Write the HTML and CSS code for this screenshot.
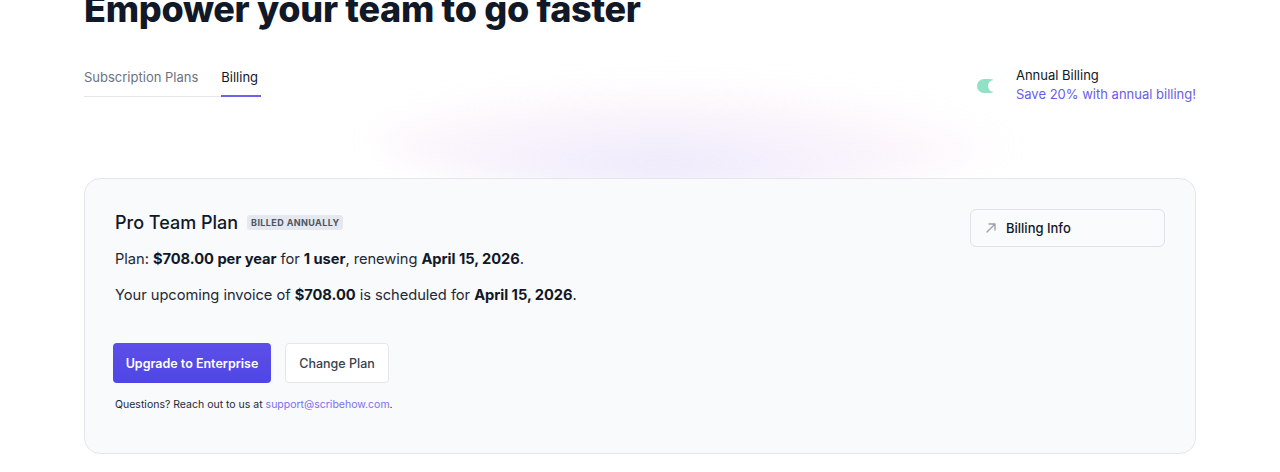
FILE: index.html
```html
<!DOCTYPE html>
<html>
<head>
    <meta charset="UTF-8">
    <link rel="stylesheet" href="styles.css">
</head>
<body>
    <div class="page">
        <h1>Empower your team to go faster</h1>

        <div class="toolbar">
            <div class="tabs">
                <span class="tab">Subscription Plans</span>
                <span class="tab active">Billing</span>
            </div>
            <div class="annual">
                <span class="toggle"><span class="knob"></span></span>
                <div class="annual-text">
                    <div class="annual-title">Annual Billing</div>
                    <div class="annual-save">Save 20% with annual billing!</div>
                </div>
            </div>
        </div>

        <div class="glow"></div>

        <div class="card">
            <div class="card-head">
                <div class="card-info">
                    <div class="plan-title">
                        <span class="plan-name">Pro Team Plan</span>
                        <span class="badge">BILLED ANNUALLY</span>
                    </div>
                    <p class="line">Plan: <b>$708.00 per year</b> for <b>1 user</b>, renewing <b>April 15, 2026</b>.</p>
                    <p class="line">Your upcoming invoice of <b>$708.00</b> is scheduled for <b>April 15, 2026</b>.</p>
                </div>
                <button class="info-btn">
                    <svg width="12" height="12" viewBox="0 0 12 12" fill="none" stroke="#9ca3af" stroke-width="1.4" stroke-linecap="round" stroke-linejoin="round"><path d="M2 10 L10 2 M4 2 H10 V8"/></svg>
                    Billing Info
                </button>
            </div>

            <div class="actions">
                <button class="btn primary">Upgrade to Enterprise</button>
                <button class="btn secondary">Change Plan</button>
            </div>
            <p class="help">Questions? Reach out to us at <a href="#" class="mail">support@scribehow.com</a>.</p>
        </div>
    </div>
</body>
</html>
```

FILE: styles.css
```css
body {
    margin: 0;
    background: #fff;
    font-family: Inter, "Noto Sans", "Liberation Sans", sans-serif;
    color: #111827;
    overflow: hidden;
}

.page {
    width: 1112px;
    margin: 0 auto;
    position: relative;
}

h1 {
    margin: -16px 0 0 0;
    font-size: 36px;
    font-weight: 800;
    letter-spacing: -0.3px;
    color: #111827;
    line-height: 50px;
    white-space: nowrap;
}

.toolbar {
    display: flex;
    justify-content: space-between;
    align-items: flex-start;
    margin-top: 32px;
    position: relative;
    z-index: 1;
}

.tabs {
    display: flex;
    gap: 23px;
    border-bottom: 1px solid #e5e7eb;
    width: 176px;
    height: 30px;
}

.tab {
    font-size: 13px;
    color: #6b7280;
    line-height: 18px;
    padding-top: 2px;
    white-space: nowrap;
}

.tab.active {
    color: #111827;
    height: 27px;
    padding-right: 3px;
    border-bottom: 2px solid #6d63e8;
}

.annual {
    display: flex;
    align-items: center;
    gap: 19px;
}

.toggle {
    width: 20px;
    height: 14px;
    border-radius: 7px;
    background: #91e2c4;
    position: relative;
    margin-top: 2px;
}

.knob {
    position: absolute;
    right: -3px;
    top: 1px;
    width: 12px;
    height: 12px;
    border-radius: 50%;
    background: #fff;
}

.annual-title {
    font-size: 13px;
    color: #111827;
    line-height: 19px;
}

.annual-save {
    font-size: 13px;
    color: #6a5ce6;
    line-height: 19px;
}

.glow {
    position: absolute;
    left: 290px;
    top: 100px;
    width: 640px;
    height: 110px;
    border-radius: 50%;
    background: radial-gradient(ellipse at 45% 75%, rgba(196, 184, 245, 0.3), rgba(240, 200, 230, 0.14) 55%, rgba(255, 255, 255, 0) 75%);
    filter: blur(14px);
}

.card {
    position: relative;
    margin-top: 74px;
    background: #f8fafc;
    border: 1px solid #e3e7ec;
    border-radius: 16px;
    padding: 30px 30px 40px 30px;
    height: 204px;
}

.card-head {
    display: flex;
    justify-content: space-between;
    align-items: flex-start;
}

.plan-title {
    display: flex;
    align-items: center;
    gap: 9px;
    margin-top: 3px;
}

.plan-name {
    font-size: 18px;
    font-weight: 500;
    color: #111827;
}

.badge {
    background: #e5e8ee;
    color: #4b5563;
    font-size: 9px;
    font-weight: 700;
    letter-spacing: 0.4px;
    padding: 2px 4px;
    border-radius: 3px;
}

.line {
    margin: 15px 0 0 0;
    font-size: 14.7px;
    color: #1f2937;
    line-height: 23px;
    letter-spacing: -0.05px;
}

.line b {
    font-weight: 700;
    color: #111827;
}

.line + .line {
    margin-top: 13px;
}

.info-btn {
    display: flex;
    align-items: center;
    gap: 9px;
    width: 195px;
    height: 38px;
    padding: 0 14px;
    background: #fafbfc;
    border: 1px solid #dfe3e8;
    border-radius: 6px;
    font-family: inherit;
    font-size: 13px;
    font-weight: 500;
    color: #111827;
}

.actions {
    display: flex;
    gap: 14px;
    margin: 36px 0 0 -2px;
}

.btn {
    height: 40px;
    border-radius: 4px;
    font-family: inherit;
    font-size: 12.5px;
    font-weight: 600;
    cursor: pointer;
}

.primary {
    width: 158px;
    background: linear-gradient(180deg, #5d4fe8, #4f46e5);
    border: none;
    color: #fff;
}

.secondary {
    width: 104px;
    background: #fff;
    border: 1px solid #e5e7eb;
    color: #374151;
    font-weight: 500;
}

.help {
    margin: 15px 0 0 0;
    font-size: 10.5px;
    color: #1f2937;
}

.mail {
    color: #7b6ff0;
    text-decoration: none;
}
```
